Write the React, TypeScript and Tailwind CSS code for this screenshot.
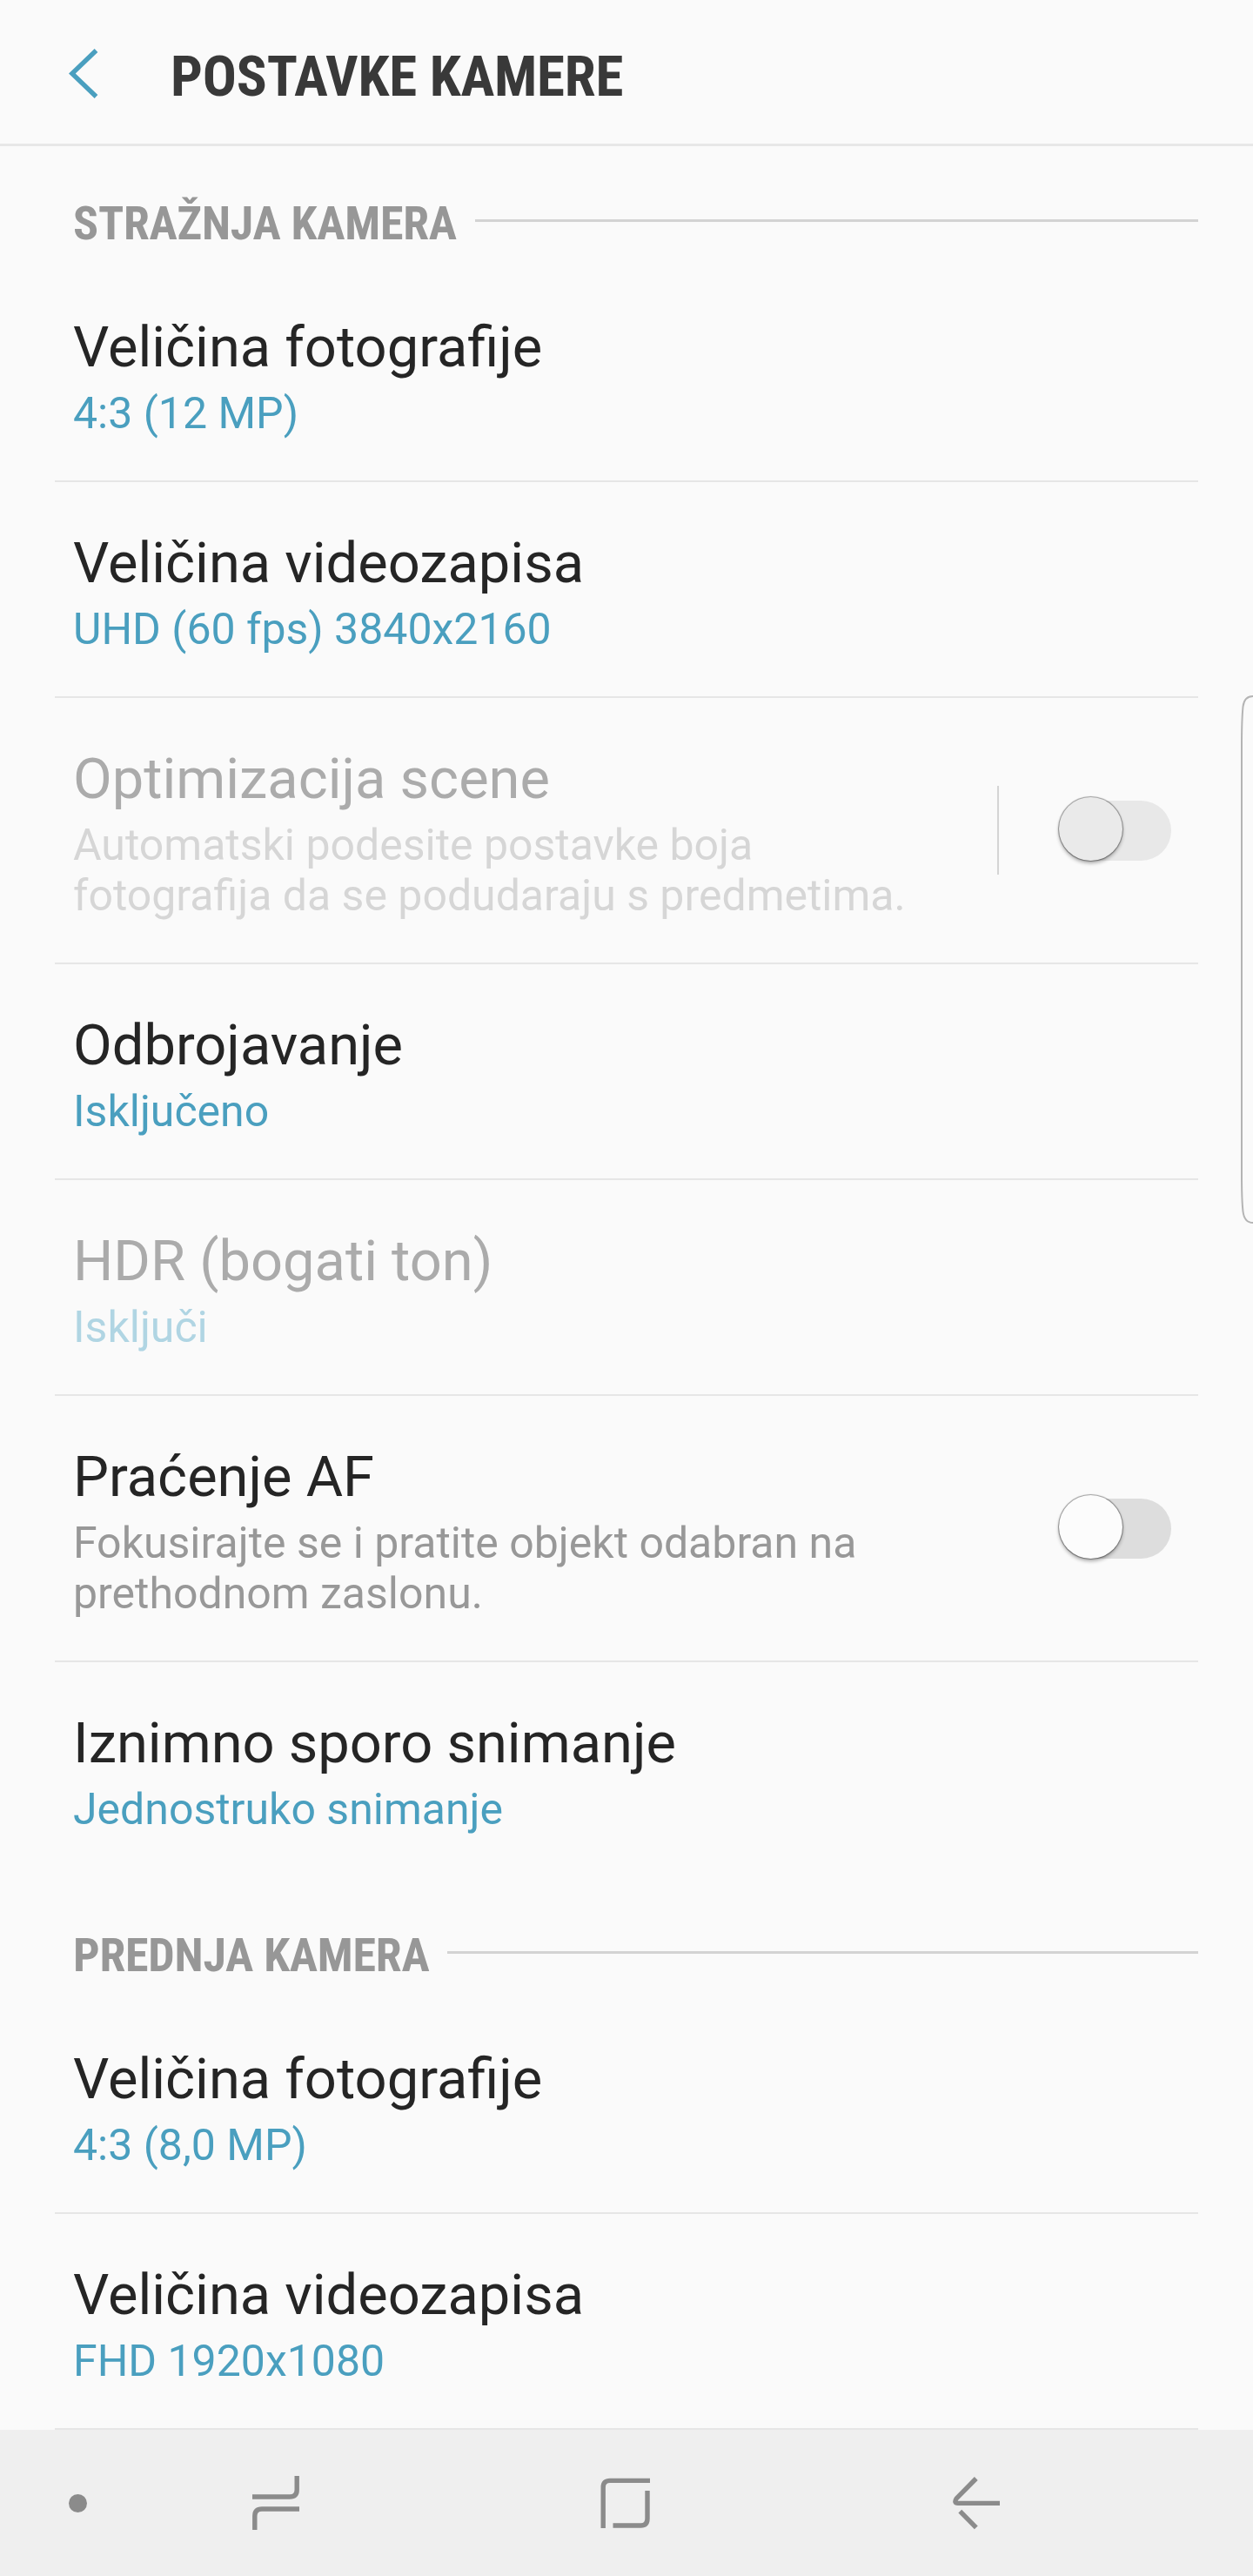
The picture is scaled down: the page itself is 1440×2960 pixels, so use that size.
import { useState } from 'react'

interface Setting {
  id: string
  title: string
  detail: string[]
  tone: 'value' | 'hint'
  toggle?: boolean
  split?: boolean
  disabled?: boolean
}

interface Section {
  id: string
  label: string
  settings: Setting[]
}

const SECTIONS: Section[] = [
  {
    id: 'rear',
    label: 'STRAŽNJA KAMERA',
    settings: [
      { id: 'rear-photo', title: 'Veličina fotografije', detail: ['4:3 (12 MP)'], tone: 'value' },
      { id: 'rear-video', title: 'Veličina videozapisa', detail: ['UHD (60 fps) 3840x2160'], tone: 'value' },
      {
        id: 'scene',
        title: 'Optimizacija scene',
        detail: ['Automatski podesite postavke boja', 'fotografija da se podudaraju s predmetima.'],
        tone: 'hint',
        toggle: true,
        split: true,
        disabled: true,
      },
      { id: 'timer', title: 'Odbrojavanje', detail: ['Isključeno'], tone: 'value' },
      { id: 'hdr', title: 'HDR (bogati ton)', detail: ['Isključi'], tone: 'value', disabled: true },
      {
        id: 'af',
        title: 'Praćenje AF',
        detail: ['Fokusirajte se i pratite objekt odabran na', 'prethodnom zaslonu.'],
        tone: 'hint',
        toggle: true,
      },
      { id: 'slowmo', title: 'Iznimno sporo snimanje', detail: ['Jednostruko snimanje'], tone: 'value' },
    ],
  },
  {
    id: 'front',
    label: 'PREDNJA KAMERA',
    settings: [
      { id: 'front-photo', title: 'Veličina fotografije', detail: ['4:3 (8,0 MP)'], tone: 'value' },
      { id: 'front-video', title: 'Veličina videozapisa', detail: ['FHD 1920x1080'], tone: 'value' },
    ],
  },
]

const DETAIL_COLORS = {
  value: { on: 'text-[#4a9fbf]', off: 'text-[#b0d5e3]' },
  hint: { on: 'text-[#989898]', off: 'text-[#d6d6d6]' },
}

function Toggle({ on, disabled, onChange }: { on: boolean; disabled?: boolean; onChange: () => void }) {
  return (
    <button
      role="switch"
      aria-checked={on}
      disabled={disabled}
      onClick={onChange}
      className={`relative mb-[5px] h-[69px] w-[129px] shrink-0 rounded-full ${disabled ? 'bg-[#e8e8e8]' : on ? 'bg-[#8fc7dc]' : 'bg-[#dddddd]'}`}
    >
      <span
        className={`absolute -top-[4px] size-[73px] rounded-full shadow-[0_0_1px_1px_rgba(0,0,0,0.36),0_3px_4px_rgba(0,0,0,0.32)] ${on ? 'right-0' : 'left-0'} ${disabled ? 'bg-[#eaeaea]' : 'bg-[#fcfcfc]'}`}
      />
    </button>
  )
}

function SettingRow({ setting, last }: { setting: Setting; last: boolean }) {
  const [on, setOn] = useState(false)
  const { title, detail, tone, toggle, split, disabled } = setting
  const detailColor = DETAIL_COLORS[tone][disabled ? 'off' : 'on']

  return (
    <li className={`flex items-center border-b-2 pt-[54px] pr-[31px] pb-[48px] pl-[21px] ${last ? 'border-transparent' : 'border-[#e6e6e6]'}`}>
      <div className="flex-1">
        <div className={`text-[65px] leading-[78px] whitespace-nowrap ${disabled ? 'text-[#ababab]' : 'text-[#252525]'}`}>
          {title}
        </div>
        <div className={`mt-[8px] text-[50px] leading-[58px] whitespace-nowrap ${detailColor}`}>
          {detail.map(line => (
            <div key={line}>{line}</div>
          ))}
        </div>
      </div>
      {split && <div className="mr-[69px] mb-[6px] h-[102px] w-[2px] bg-[#d4d4d4]" />}
      {toggle && <Toggle on={on} disabled={disabled} onChange={() => setOn(!on)} />}
    </li>
  )
}

function NavBar() {
  return (
    <nav className="flex h-[168px] shrink-0 items-center bg-[#efefef] pl-[79px] text-[#8b8b8b]">
      <span className="size-[21px] rounded-full bg-current" />
      <button className="ml-[190px]" aria-label="Recents">
        <svg width="54" height="62" viewBox="0 0 54 62" fill="none" stroke="currentColor" strokeWidth="5.4">
          <path d="M51.2 0V16Q51.2 24 43 24H0" />
          <path d="M54 38H11Q2.8 38 2.8 46V62" />
        </svg>
      </button>
      <button className="ml-[346px]" aria-label="Home">
        <svg width="57" height="58" viewBox="0 0 57 58" fill="none" stroke="currentColor" strokeWidth="5.4">
          <path d="M3.2 58V11Q3.2 3.4 11 3.4H57" />
          <path d="M54 14.9V47Q54 55 46.5 55H14.5" />
        </svg>
      </button>
      <button className="ml-[348px]" aria-label="Back">
        <svg width="54" height="62" viewBox="0 0 54 62" fill="none" stroke="currentColor" strokeWidth="5.4">
          <path d="M26.8 3L4.2 25.8Q0.8 31.4 6 31.4H54" />
          <path d="M8.3 40.6L26.8 59.4" />
        </svg>
      </button>
    </nav>
  )
}

export default function App() {
  return (
    <div className="relative flex h-[2960px] w-[1440px] flex-col overflow-hidden bg-[#fafafa] font-['Roboto',sans-serif]">
      <header className="flex h-[168px] shrink-0 items-center border-b-[3px] border-[#e7e7e7] pl-[79px]">
        <svg className="mt-[3px]" width="34" height="57" viewBox="0 0 34 57" fill="none" stroke="#4a9fbf" strokeWidth="5.4">
          <path d="M31.5 2L3.8 28.5L31.5 55" />
        </svg>
        <h1 className="mt-[11px] ml-[83px] font-['Roboto_Condensed','Roboto',sans-serif] text-[65px] leading-[78px] font-bold tracking-[-0.2px] whitespace-nowrap text-[#393939]">
          POSTAVKE KAMERE
        </h1>
      </header>

      <main className="flex-1 pr-[63px] pl-[63px]">
        {SECTIONS.map(section => (
          <section key={section.id}>
            <div className="flex h-[138px] items-center pl-[21px]">
              <h2 className="mt-[39px] font-['Roboto_Condensed','Roboto',sans-serif] text-[54px] leading-[64px] font-bold tracking-[-0.25px] whitespace-nowrap text-[#979797]">
                {section.label}
              </h2>
              <div className="mt-[33px] ml-[21px] h-[3px] flex-1 bg-[#d3d3d3]" />
            </div>
            <ul>
              {section.settings.map((s, i) => (
                <SettingRow key={s.id} setting={s} last={section.id === 'rear' && i === section.settings.length - 1} />
              ))}
            </ul>
          </section>
        ))}
      </main>

      <NavBar />

      {/* Edge panel handle */}
      <svg className="absolute top-[797px] right-0" width="16" height="612" viewBox="0 0 16 612" fill="none" stroke="#b4b4b4" strokeWidth="2">
        <path d="M16 3Q6 3 4.5 15Q3 30 3 60V552Q3 582 4.5 595Q6 608 16 608" />
      </svg>
    </div>
  )
}
